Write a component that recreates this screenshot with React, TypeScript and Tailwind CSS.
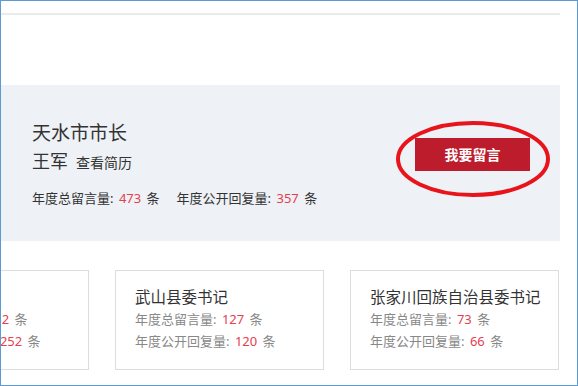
export default function App() {
  const cards = [
    { title: '甘谷县委书记', msg: 352, reply: 252 },
    { title: '武山县委书记', msg: 127, reply: 120 },
    { title: '张家川回族自治县委书记', msg: 73, reply: 66 },
  ]

  return (
    <div className="relative h-[386px] w-[578px] overflow-hidden border border-[#5b9bd5] bg-white font-['Noto_Sans','Noto_Sans_CJK_SC',sans-serif]">
      <div className="ml-[-121px] w-[680px]">
        {/* top divider */}
        <div className="mt-[12px] h-[2px] bg-[#ebebeb]" />

        {/* leader panel */}
        <div className="mt-[70px] flex h-[156px] justify-between bg-[#eef1f6] pl-[152px] pr-[30px]">
          <div className="pt-[35px] text-[#333]">
            <div className="text-[19px] leading-[26px]">天水市市长</div>
            <div className="mt-[2px] flex items-baseline leading-[26px]">
              <span className="text-[18px]">王军</span>
              <span className="ml-[8px] text-[14px]">查看简历</span>
            </div>
            <div className="mt-[12px] text-[13px] leading-[20px] [word-spacing:2px]">
              <span>年度总留言量: </span>
              <span className="text-[#e5404e]">473</span>
              <span> 条</span>
              <span className="ml-[17px]">年度公开回复量: </span>
              <span className="text-[#e5404e]">357</span>
              <span> 条</span>
            </div>
          </div>
          <button className="mt-[53px] flex h-[33px] w-[115px] items-center justify-center bg-[#bd1c2c] text-[14px] font-semibold text-white">
            我要留言
          </button>
        </div>

        {/* county cards */}
        <div className="mt-[29px] grid grid-cols-[209px_209px_209px] gap-[26px]">
          {cards.map((c) => (
            <div key={c.title} className="h-[100px] border border-[#dddddd] bg-white pl-[19px] pt-[15px]">
              <div className="text-[15.5px] leading-[22px] text-[#333]">{c.title}</div>
              <div className="text-[13px] leading-[22px] text-[#888] [word-spacing:2px]">
                年度总留言量: <span className="text-[#e5404e]">{c.msg}</span> 条
              </div>
              <div className="text-[13px] leading-[22px] text-[#888] [word-spacing:2px]">
                年度公开回复量: <span className="text-[#e5404e]">{c.reply}</span> 条
              </div>
            </div>
          ))}
        </div>
      </div>

      {/* red annotation ring */}
      <svg className="absolute left-[393px] top-[118px]" width="158" height="80" viewBox="0 0 158 80">
        <ellipse cx="79" cy="40" rx="75" ry="36" fill="none" stroke="#e8141c" strokeWidth="4" />
      </svg>
    </div>
  )
}
